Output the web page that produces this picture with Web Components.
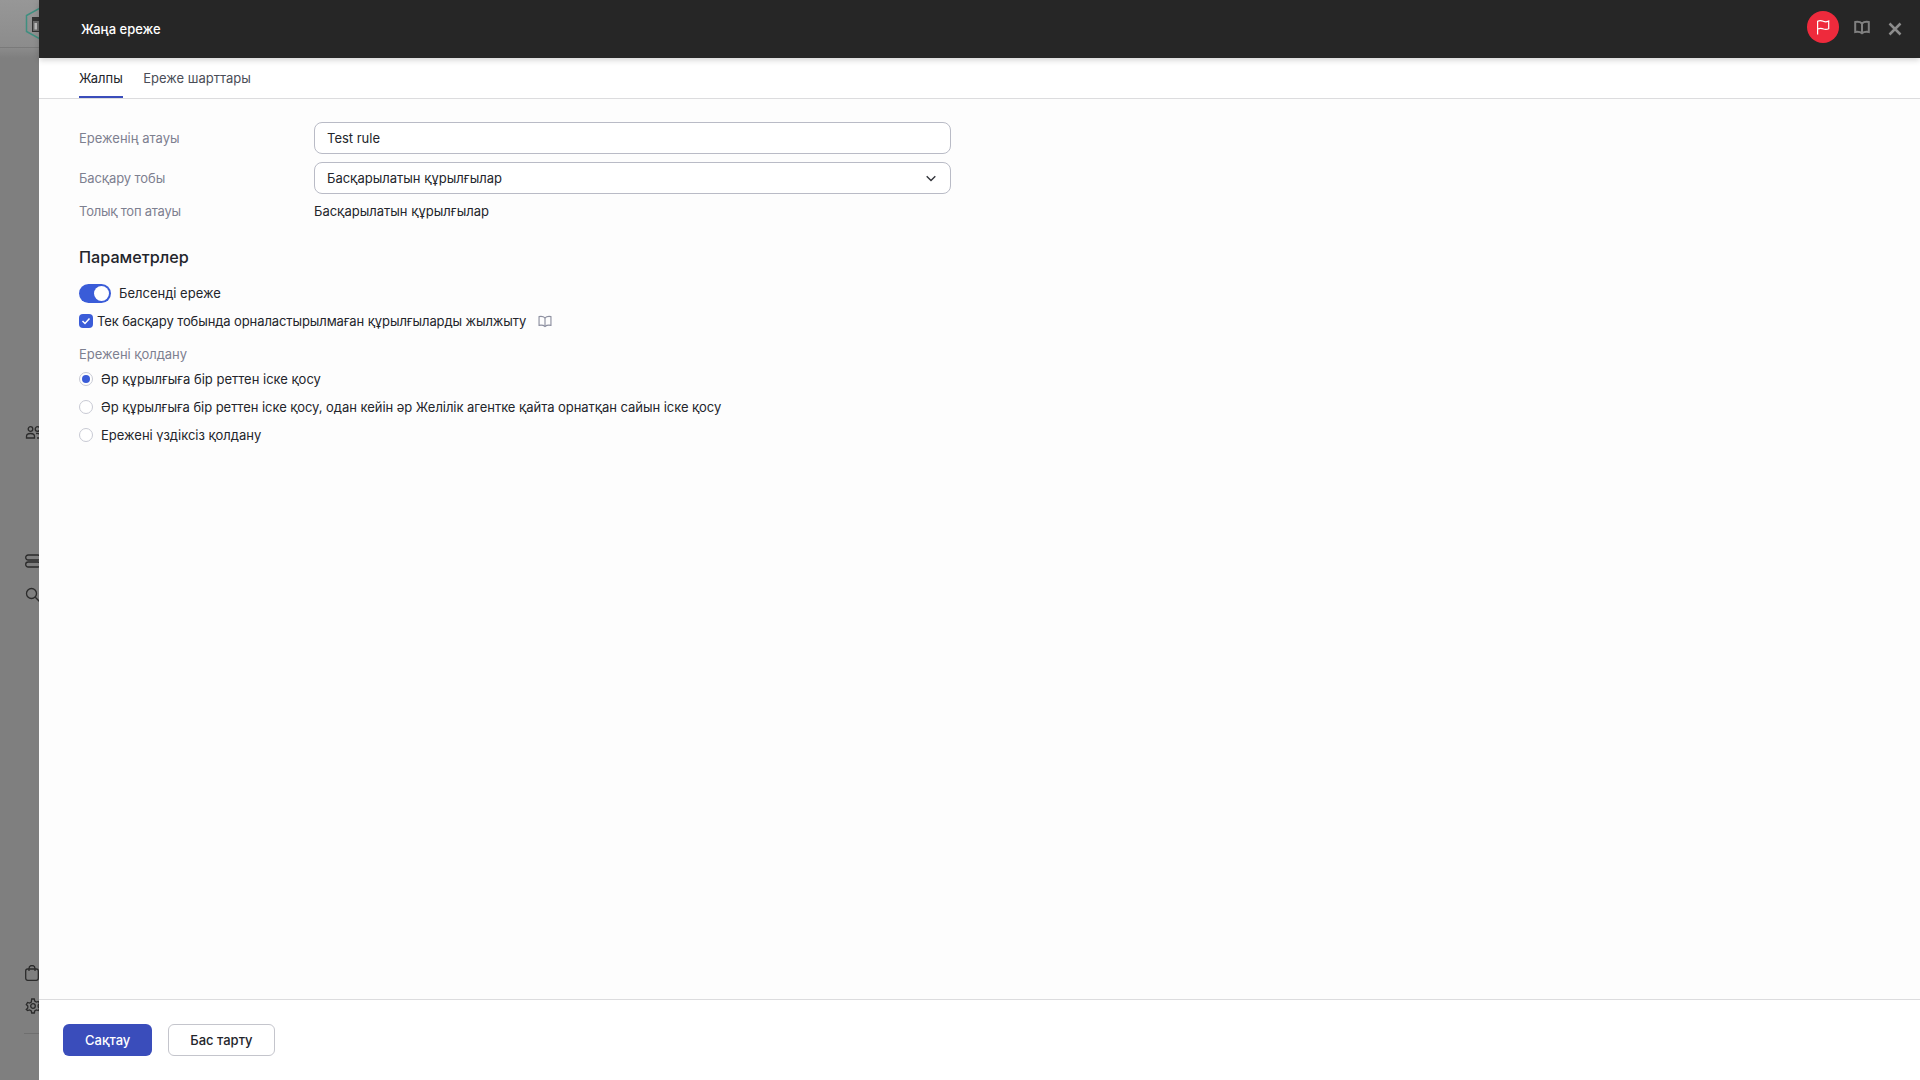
<!DOCTYPE html>
<html lang="kk">
<head>
<meta charset="utf-8">
<title>Жаңа ереже</title>
<style>
  html, body { margin: 0; height: 100%; overflow: hidden; }
  body { font-family: Inter, "Noto Sans", sans-serif; font-size: 13px; color: #23252b; }
</style>
</head>
<body>
<rule-page>
  <side-nav slot="nav"></side-nav>
  <rule-drawer slot="drawer" heading="Жаңа ереже">
    <tab-bar></tab-bar>
    <form-row label="Ереженің атауы" kind="input" value="Test rule"></form-row>
    <form-row label="Басқару тобы" kind="select" value="Басқарылатын құрылғылар" track="-0.1"></form-row>
    <form-row label="Толық топ атауы" kind="text" value="Басқарылатын құрылғылар" track="-0.24"></form-row>
    <section-title>Параметрлер</section-title>
    <toggle-field>Белсенді ереже</toggle-field>
    <check-field>Тек басқару тобында орналастырылмаған құрылғыларды жылжыту</check-field>
    <field-caption>Ережені қолдану</field-caption>
    <radio-field checked>Әр құрылғыға бір реттен іске қосу</radio-field>
    <radio-field track="-0.045">Әр құрылғыға бір реттен іске қосу, одан кейін әр Желілік агентке қайта орнатқан сайын іске қосу</radio-field>
    <radio-field>Ережені үздіксіз қолдану</radio-field>
    <drawer-button slot="footer" primary>Сақтау</drawer-button>
    <drawer-button slot="footer">Бас тарту</drawer-button>
  </rule-drawer>
</rule-page>

<script>
  const bookIcon = (size, color, sw) => `
    <svg width="${size}" height="${size}" viewBox="0 0 16 16" fill="none" stroke="${color}" stroke-width="${sw}">
      <path d="M8 4.5C6.500 3 4 2.500 1.200 3v10c2.800-.5 5.300 0 6.800 1.300 1.500-1.300 4-1.800 6.800-1.300V3C12 2.500 9.500 3 8 4.500Z"/>
      <path d="M8 4.500v9.500"/>
    </svg>`;

  class RulePage extends HTMLElement {
    constructor() {
      super();
      this.attachShadow({ mode: "open" }).innerHTML = `
        <style>
          :host { display: flex; height: 100vh; width: 100vw; overflow: hidden; }
          ::slotted([slot=nav]) { flex: 0 0 39px; }
          ::slotted([slot=drawer]) { flex: 1 1 auto; min-width: 0; }
        </style>
        <slot name="nav"></slot>
        <slot name="drawer"></slot>
      `;
    }
  }

  class SideNav extends HTMLElement {
    constructor() {
      super();
      this.attachShadow({ mode: "open" }).innerHTML = `
        <style>
          :host { display: flex; flex-direction: column; width: 39px; overflow: hidden; background: #7f7f7f; height: 100vh; }
          .top { height: 47px; flex: none; background: linear-gradient(#979797, #8c8c8c); border-bottom: 1px solid #7a7a7a; position: relative; }
          .band { height: 10px; flex: none; background: linear-gradient(#8b8b8b, #7f7f7f); }
          svg { display: block; flex: none; margin-left: 25px; fill: none; stroke: #2b2b2b; stroke-width: 1.300; }
          .logo { position: absolute; left: 25px; top: 7px; margin: 0; stroke: none; }
          .rule { height: 1px; flex: none; background: #6f6f6f; margin-left: 24px; }
        </style>
        <div class="top">
          <svg class="logo" width="30" height="33" viewBox="0 0 30 33">
            <path d="M15 1 1.500 8.500v16L15 32" fill="none" stroke="#3f8f80" stroke-width="1.500"/>
            <rect x="7.500" y="10.500" width="16" height="14" fill="#6c6c6c" stroke="#333" stroke-width="1"/>
            <rect x="7.500" y="10.500" width="16" height="3.500" fill="#333"/>
            <rect x="9.500" y="16" width="2.500" height="6.500" fill="#bdbdbd"/>
          </svg>
        </div>
        <div class="band"></div>
        <svg style="margin-top:366px" width="18" height="18" viewBox="0 0 18 18">
          <circle cx="5.500" cy="5" r="2.300"/><circle cx="12.500" cy="5" r="2.300"/>
          <path d="M1.500 14v-1.500c0-2 1.500-3 4-3s4 1 4 3V14Z"/><path d="M11 9.500c3 -.3 5.500.8 5.500 3V14H12"/>
        </svg>
        <svg style="margin-top:111px" width="16" height="16" viewBox="0 0 16 16">
          <rect x=".7" y="2" width="14.600" height="5" rx="2.500"/><rect x=".7" y="9" width="14.600" height="5" rx="2.500"/>
        </svg>
        <svg style="margin-top:18px" width="16" height="16" viewBox="0 0 16 16">
          <circle cx="6.500" cy="6.500" r="5"/><path d="m10.300 10.300 5 5"/>
        </svg>
        <svg style="margin-top:362px" width="14" height="16" viewBox="0 0 14 16">
          <rect x=".7" y="4" width="12.600" height="11.300" rx="2"/><path d="M4 6V3.500a3 3 0 0 1 6 0V6"/>
        </svg>
        <svg style="margin-top:17px" width="16" height="16" viewBox="0 0 16 16">
          <circle cx="8" cy="8" r="2.300"/>
          <path d="m6.700 1h2.600l.4 2 1.700 1 2-.6 1.300 2.200-1.500 1.400v2l1.500 1.400-1.300 2.200-2-.6-1.700 1-.4 2H6.700l-.4-2-1.700-1-2 .6L1.300 11.400l1.500-1.400V8L1.300 6.600 2.600 4.400l2 .6 1.700-1Z"/>
        </svg>
        <div class="rule" style="margin-top:19px"></div>
      `;
    }
  }

  class RuleDrawer extends HTMLElement {
    constructor() {
      super();
      this.attachShadow({ mode: "open" }).innerHTML = `
        <style>
          :host { display: flex; flex-direction: column; height: 100vh; background: #fff; }
          header { height: 58px; flex: none; background: #262626; color: #fff; display: flex; align-items: center;
                   padding: 0 18px 0 42px; box-shadow: 0 2px 6px rgba(0,0,0,.18); position: relative; font-weight: 500; font-size: 13px; }
          h1 { font: inherit; margin: 0 0 1px; flex: 1; }
          .flag { width: 32px; height: 32px; border-radius: 50%; background: #ee2a3c; display: flex; align-items: center; justify-content: center; margin: -4px 15px 0 0; }
          .tool { display: block; }
          .book { margin: -1px 18px 0 0; }
          main { flex: 1; min-height: 0; background: #fdfdfd; padding: 23px 39px 0 40px; box-sizing: border-box; }
          .panel { background: #fdfdfd; display: flex; flex-direction: column; }
          footer { height: 81px; flex: none; box-sizing: border-box; border-top: 1px solid #dcdcde; background: #fff;
                   display: flex; align-items: center; gap: 16px; padding: 0 0 0 24px; }
        </style>
        <header>
          <h1>${this.getAttribute("heading")}</h1>
          <span class="flag">
            <svg width="16" height="18" viewBox="0 0 16 18" fill="none" stroke="#fff" stroke-width="1.200">
              <path d="M2.600 16.500V3.200c3-1.200 4.600-.4 6 .2 1.500.6 2.900.7 5.100-.4v7.700c-2.200 1-3.600.9-5.100.3-1.400-.6-3-1.200-6 0"/>
            </svg>
          </span>
          <span class="tool book">${bookIcon(16, "#808080", 2)}</span>
          <svg class="tool" width="14" height="14" viewBox="0 0 14 14" stroke="#8c8c8c" stroke-width="2.500"><path d="m1.500 1.500 11 11M12.500 1.500l-11 11"/></svg>
        </header>
        <slot name="tabs"></slot>
        <main><div class="panel"><slot></slot></div></main>
        <footer><slot name="footer"></slot></footer>
      `;
    }
    connectedCallback() {
      const tabs = this.querySelector("tab-bar");
      if (tabs) tabs.slot = "tabs";
    }
  }

  class TabBar extends HTMLElement {
    constructor() {
      super();
      this.attachShadow({ mode: "open" }).innerHTML = `
        <style>
          :host { display: flex; height: 41px; flex: none; box-sizing: border-box; padding: 0 0 0 40px; gap: 20.5px; background: #fff;
                  border-bottom: 1px solid #dcdcde; color: #4a4d57; }
          span { display: block; line-height: 40px; height: 40px; box-sizing: border-box; }
          .on { color: #23252b; border-bottom: 2px solid #3a4dbb; }
        </style>
        <span class="on">Жалпы</span>
        <span>Ереже шарттары</span>
      `;
    }
  }

  class FormRow extends HTMLElement {
    constructor() {
      super();
      const kind = this.getAttribute("kind");
      const value = this.getAttribute("value");
      const track = this.getAttribute("track") || 0;
      const chevron = `<svg width="10" height="7" viewBox="0 0 10 7" fill="none" stroke="#33353b" stroke-width="1.400"><path d="m.7 1.200 4.300 4.300 4.300-4.300"/></svg>`;
      const field = kind === "text"
        ? `<div class="plain">${value}</div>`
        : `<div class="box"><span>${value}</span>${kind === "select" ? chevron : ""}</div>`;
      this.attachShadow({ mode: "open" }).innerHTML = `
        <style>
          :host { display: grid; grid-template-columns: 235px 637px; align-items: center; margin-bottom: 8px; }
          .label { color: #7d8090; margin-top: -1px; letter-spacing: ${track}px; }
          .box { height: 32px; box-sizing: border-box; border: 1px solid #b9bbc6; border-radius: 8px; background: #fff;
                 display: flex; align-items: center; justify-content: space-between; padding: 0 14px 0 12px; }
          .plain { line-height: 18px; }
        </style>
        <div class="label">${this.getAttribute("label")}</div>
        ${field}
      `;
    }
  }

  class SectionTitle extends HTMLElement {
    constructor() {
      super();
      this.attachShadow({ mode: "open" }).innerHTML = `
        <style>:host { display: block; font-size: 16.2px; font-weight: 500; line-height: 24px; margin: 17px 0 15px; }</style>
        <slot></slot>
      `;
    }
  }

  class ToggleField extends HTMLElement {
    constructor() {
      super();
      this.attachShadow({ mode: "open" }).innerHTML = `
        <style>
          :host { display: flex; align-items: center; gap: 8px; height: 18px; margin-bottom: 10px; }
          .track { width: 32px; height: 19px; border-radius: 10px; background: #3a5cd8; position: relative; flex: none; }
          .knob { position: absolute; right: 2px; top: 2px; width: 15px; height: 15px; border-radius: 50%; background: #fff; }
        </style>
        <span class="track"><span class="knob"></span></span>
        <slot></slot>
      `;
    }
  }

  class CheckField extends HTMLElement {
    constructor() {
      super();
      this.attachShadow({ mode: "open" }).innerHTML = `
        <style>
          :host { display: flex; align-items: center; height: 18px; margin-bottom: 15px; letter-spacing: -0.1px; }
          .box { width: 14px; height: 14px; border-radius: 4px; background: #3a5cd8; display: flex; align-items: center; justify-content: center; margin-right: 4px; }
          .hint { margin-left: 12px; display: flex; }
        </style>
        <span class="box">
          <svg width="10" height="10" viewBox="0 0 10 10" fill="none" stroke="#fff" stroke-width="1.500"><path d="m1.500 5 2.500 2.500 4.500-5"/></svg>
        </span>
        <slot></slot>
        <span class="hint">${bookIcon(14, "#8d90a0", 1.300)}</span>
      `;
    }
  }

  class FieldCaption extends HTMLElement {
    constructor() {
      super();
      this.attachShadow({ mode: "open" }).innerHTML = `
        <style>:host { display: block; color: #7d8090; line-height: 18px; margin-bottom: 7px; }</style>
        <slot></slot>
      `;
    }
  }

  class RadioField extends HTMLElement {
    constructor() {
      super();
      const on = this.hasAttribute("checked");
      const track = this.getAttribute("track") || 0;
      this.attachShadow({ mode: "open" }).innerHTML = `
        <style>
          :host { display: flex; align-items: center; gap: 8px; height: 18px; margin-bottom: 10px; letter-spacing: ${track}px; }
          .dot { width: 14px; height: 14px; box-sizing: border-box; border-radius: 50%; flex: none; background: #fff; border: 1px solid #c8cad4;
                 display: flex; align-items: center; justify-content: center; }
          .dot i { width: 8px; height: 8px; border-radius: 50%; background: #3a5cd8; }
        </style>
        <span class="dot">${on ? "<i></i>" : ""}</span>
        <slot></slot>
      `;
    }
  }

  class DrawerButton extends HTMLElement {
    constructor() {
      super();
      const primary = this.hasAttribute("primary");
      this.attachShadow({ mode: "open" }).innerHTML = `
        <style>
          :host { display: flex; align-items: center; justify-content: center; height: 32px; box-sizing: border-box; border-radius: 6px; font-weight: 500;
                  ${primary ? "padding:0 22px;background:#3a4dbb;color:#fff;" : "padding:0 21px;background:#fff;border:1px solid #c4c5cc;color:#23252b;"} }
        </style>
        <slot></slot>
      `;
    }
  }

  customElements.define("rule-page", RulePage);
  customElements.define("side-nav", SideNav);
  customElements.define("rule-drawer", RuleDrawer);
  customElements.define("tab-bar", TabBar);
  customElements.define("form-row", FormRow);
  customElements.define("section-title", SectionTitle);
  customElements.define("toggle-field", ToggleField);
  customElements.define("check-field", CheckField);
  customElements.define("field-caption", FieldCaption);
  customElements.define("radio-field", RadioField);
  customElements.define("drawer-button", DrawerButton);
</script>
</body>
</html>
